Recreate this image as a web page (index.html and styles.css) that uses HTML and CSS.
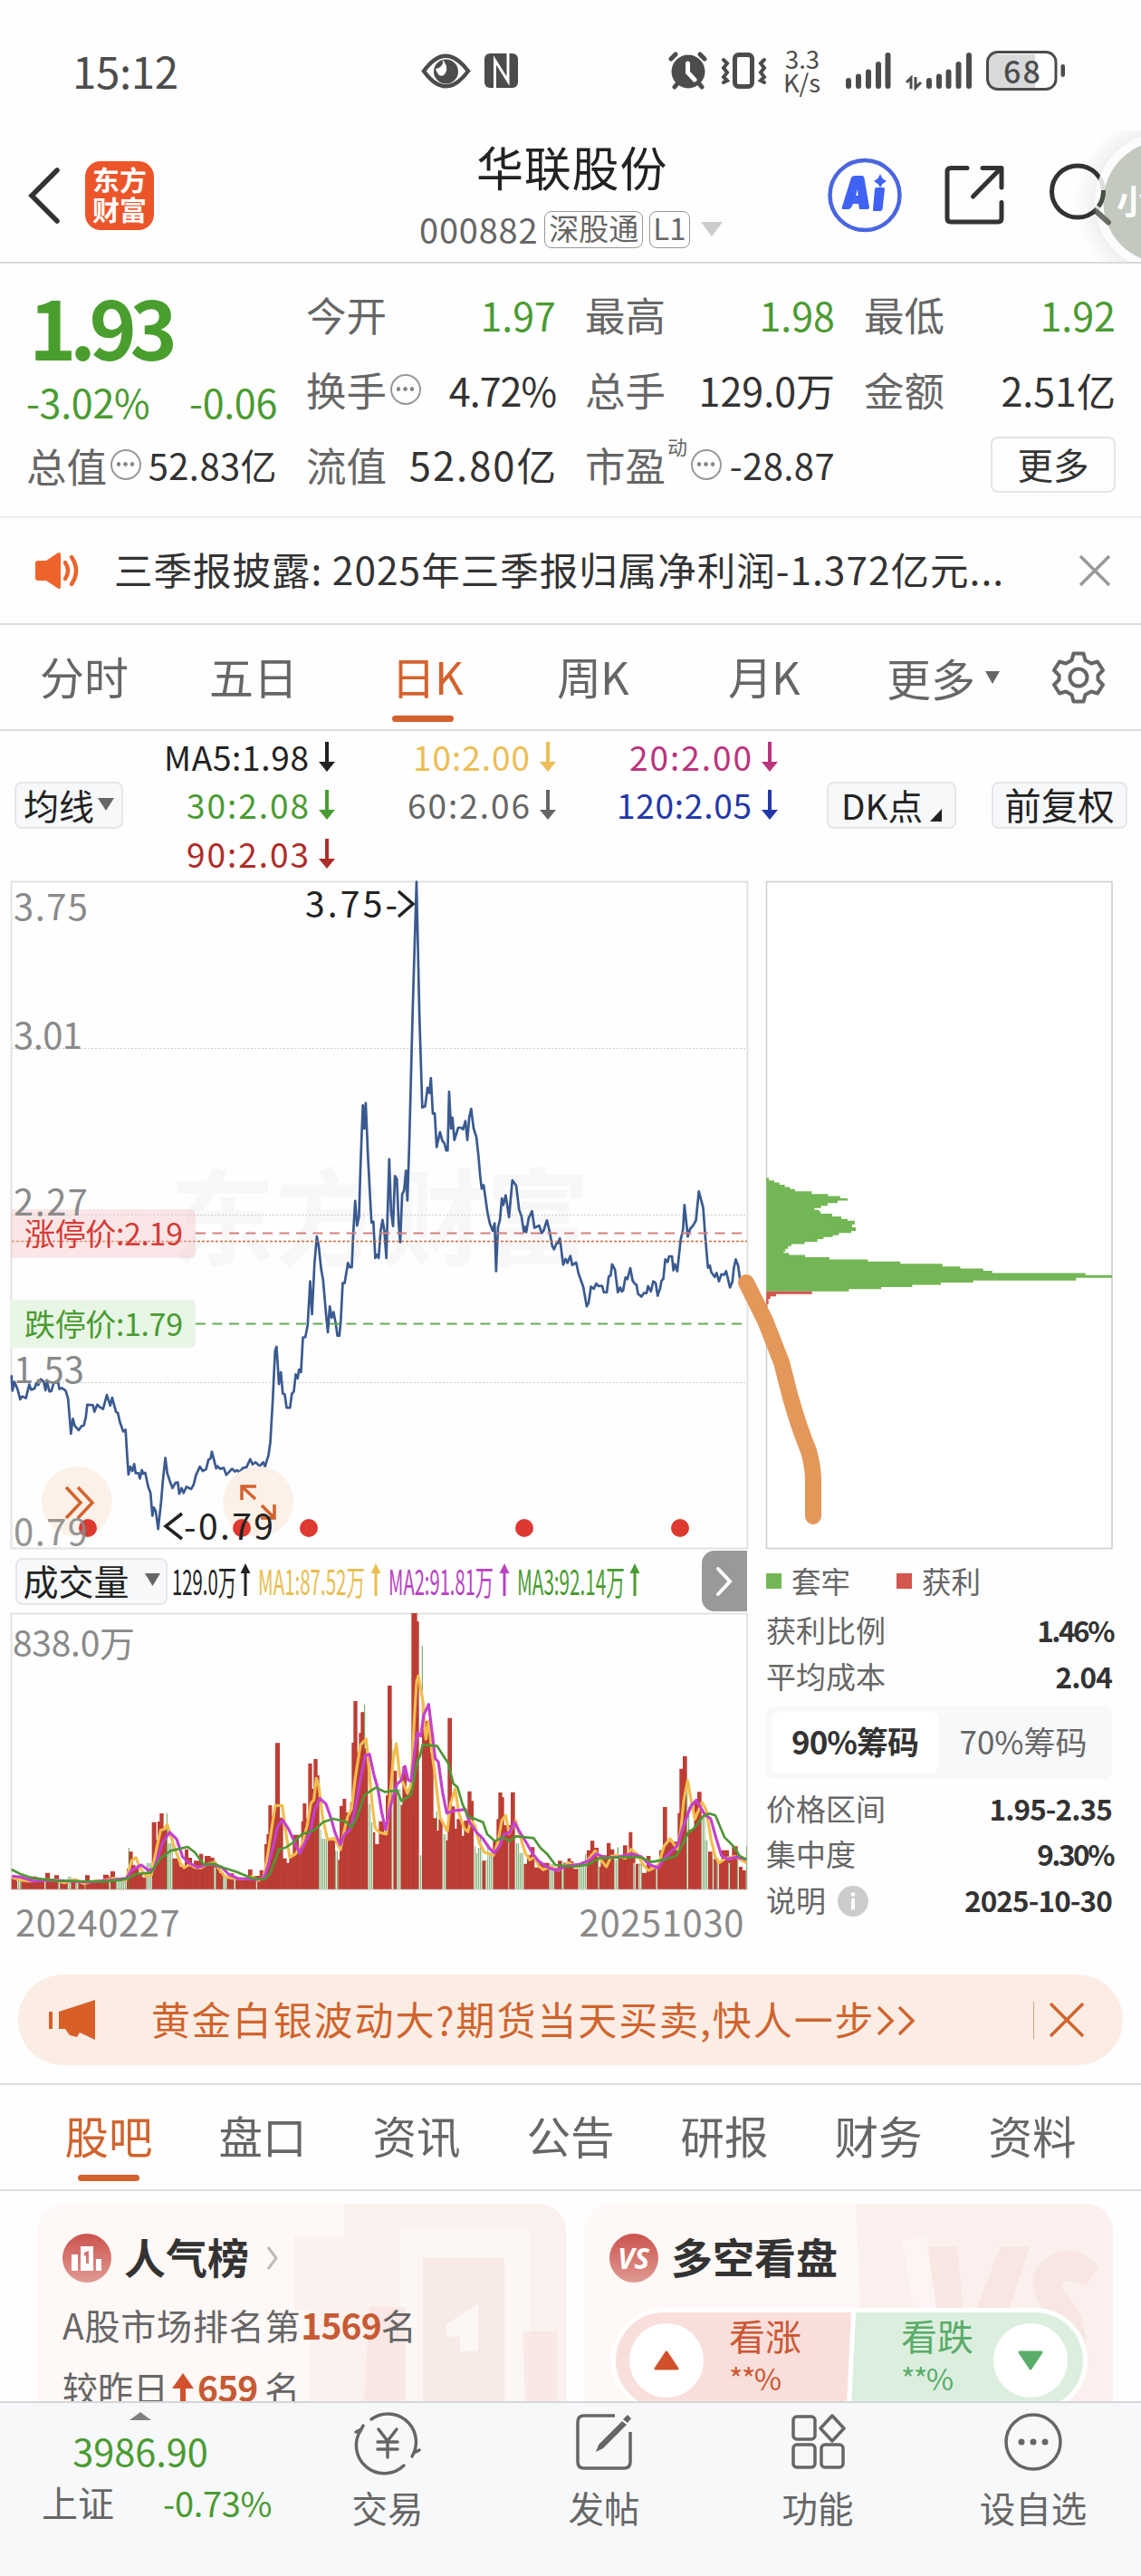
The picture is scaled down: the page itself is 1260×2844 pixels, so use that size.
FILE: index.html
```html
<!DOCTYPE html>
<html lang="zh-CN">
<head>
<meta charset="utf-8">
<title>华联股份 000882</title>
<link rel="stylesheet" href="styles.css">
</head>
<body>
<main class="app">

<div class="status">
  <span class="clock">15:12</span>
  <svg class="status-mid" width="110" height="44" viewBox="464 56 110 44">
    <path d="M468 78.500Q492 45 517 78.500Q492 112 468 78.500Z" fill="none" stroke="#4c4c4c" stroke-width="4.500"/>
    <circle cx="492.500" cy="79" r="13.500" fill="#4c4c4c"/><path d="M481 76Q490 74 489 66Q497 76 490 83Q484 86 481 76Z" fill="#fff"/>
    <rect x="535" y="59" width="37" height="38" rx="6" fill="#4c4c4c"/>
    <path d="M546.500 97V66.500L561 89.500V59" fill="none" stroke="#fff" stroke-width="3"/>
  </svg>
  <svg class="status-right" width="442" height="48" viewBox="736 54 442 48">
    <g stroke="#4c4c4c" stroke-width="5" stroke-linecap="round" fill="none">
      <path d="M741 65L746 60M778 65L773 60M745 96L750 90M775 96L770 90"/>
      <rect x="811.500" y="60.500" width="19" height="35" rx="4"/>
      <path d="M799 66L803 70L799 75L803 80L799 85L803 89L799 91M844 66L840 70L844 75L840 80L844 85L840 89L844 91" stroke-width="4"/>
    </g>
    <circle cx="760" cy="79" r="18.500" fill="#4c4c4c"/><path d="M759.500 70V80L767 88" stroke="#fff" stroke-width="5" fill="none" stroke-linecap="round"/>
    <g fill="#4c4c4c" class="txt" font-size="27.500"><text x="867" y="76" textLength="38">3.3</text><text x="865" y="101.500" textLength="41">K/s</text></g>
    <path stroke="#4c4c4c" stroke-width="6" stroke-linecap="round" d="M937 89V95M948 84.500V95M959 79.500V95M970 71V95M980.500 61V95M1026 89V95M1037 84.500V95M1047.500 79.500V95M1058.500 71V95M1070 61V95"/>
    <path stroke="#4c4c4c" stroke-width="3" fill="none" d="M1001 91L1006 86V98M1011 85V97L1017 91"/>
    <path d="M1092 60H1143V97H1092Z" fill="#d9d9d9"/>
    <rect x="1090.500" y="57.500" width="75.500" height="41" rx="11" fill="none" stroke="#4c4c4c" stroke-width="3"/>
    <rect x="1171.500" y="71" width="4.500" height="14" rx="2.200" fill="#4c4c4c"/>
    <text class="txt med" x="1108" y="91.500" font-size="34" textLength="41" fill="#4c4c4c">68</text>
  </svg>
</div>

<header class="header">
  <svg class="back" width="42" height="70" viewBox="0 0 42 70"><path d="M35 7L7 35L35 63" fill="none" stroke="#333" stroke-width="5.500" stroke-linecap="round"/></svg>
  <div class="logo"><span>东方</span><span>财富</span></div>
  <div class="title-box">
    <h1 class="title">华联股份</h1>
    <div class="code"><span class="code-num">000882</span><span class="badge wide">深股通</span><span class="badge">L1</span><svg width="26" height="18"><path d="M1 1H25L13 17Z" fill="#ccc"/></svg></div>
  </div>
  <svg class="header-icons" width="360" height="146" viewBox="900 144 360 146">
    <defs><radialGradient id="halo"><stop offset=".72" stop-color="#000" stop-opacity=".13"/><stop offset="1" stop-color="#000" stop-opacity="0"/></radialGradient></defs>
    <circle cx="955" cy="215.500" r="38.500" fill="none" stroke="#4a66e0" stroke-width="4.500"/>
    <path fill="#4062f4" fill-rule="evenodd" d="M940 196Q941 194 944 194H952Q954 194 954.500 197L960 229Q960 231 957 231H949L948 225H942L940 229Q939 231 937 231H931Q929 231 930 228ZM945 216H947.500L947 209ZM967 207H975Q977 207 977 209L974.500 231Q974 233 972 233H966Q963.500 233 964 231L966 209ZM972 192L974.500 197L979 200L974.500 203L972 207L969.500 203L965 200L969.500 197Z"/>
    <path fill="none" stroke="#333" stroke-width="5" stroke-linecap="round" stroke-linejoin="round" d="M1068 185.500H1050Q1046 185.500 1046 189.500V241Q1046 245 1050 245H1102Q1106 245 1106 241V223.500M1085 185.500H1106V207M1105 186L1074.500 217"/>
    <circle cx="1190" cy="211.500" r="28.500" fill="none" stroke="#333" stroke-width="5"/><path d="M1211 233L1224 245.500" stroke="#333" stroke-width="6" stroke-linecap="round"/>
    <circle cx="1286" cy="223" r="100" fill="url(#halo)" opacity=".5"/>
    <circle cx="1286" cy="223" r="77" fill="#fff" opacity=".45"/><circle cx="1286" cy="223" r="72" fill="none" stroke="#fff" stroke-width="9" opacity=".7"/>
    <circle cx="1286" cy="223" r="67.500" fill="#c4c9c0"/>
    <path d="M1210 233L1224 245.500" stroke="#454e43" stroke-width="6" stroke-linecap="round" opacity=".75"/><path d="M1218.500 210A28.500 28.500 0 0 1 1213 228" stroke="#454e43" fill="none" stroke-width="5"/>
    <text class="txt bold" x="1233" y="237" font-size="37" fill="#fff">小</text>
  </svg>
</header>

<section class="quote">
  <div class="price-col">
    <div class="price">1.93</div>
    <div class="change"><span>-3.02%</span><span>-0.06</span></div>
    <div class="pair small"><span class="lab">总值<i class="more-dot"></i></span><b class="tight">52.83亿</b></div>
  </div>
  <div class="qcol">
    <div class="pair"><span class="lab">今开</span><b class="down">1.97</b></div>
    <div class="pair"><span class="lab">换手<i class="more-dot"></i></span><b class="pct">4.72%</b></div>
    <div class="pair"><span class="lab">流值</span><b class="mid">52.80亿</b></div>
  </div>
  <div class="qcol">
    <div class="pair"><span class="lab">最高</span><b class="down">1.98</b></div>
    <div class="pair"><span class="lab">总手</span><b>129.0万</b></div>
    <div class="pair"><span class="lab">市盈<sup>动</sup><i class="more-dot"></i></span><b class="tight">-28.87</b></div>
  </div>
  <div class="qcol">
    <div class="pair"><span class="lab">最低</span><b class="down">1.92</b></div>
    <div class="pair"><span class="lab">金额</span><b>2.51亿</b></div>
    <div class="pair end"><span class="more-btn">更多</span></div>
  </div>
</section>

<section class="notice">
  <svg width="52" height="44" viewBox="0 0 52 44"><path d="M4 11H13L25 3Q29 0 29 5V39Q29 44 25 41L13 33H4Q1 33 1 30V14Q1 11 4 11Z" fill="#ee632c"/><path d="M34 13Q40 22 34 31M41 7Q51 22 41 37" stroke="#ee632c" stroke-width="4.500" fill="none" stroke-linecap="round"/></svg>
  <span class="notice-text">三季报披露: 2025年三季报归属净利润-1.372亿元...</span>
  <svg width="36" height="36" viewBox="0 0 36 36"><path d="M2 2L34 34M34 2L2 34" stroke="#999" stroke-width="3.500"/></svg>
</section>

<nav class="periods">
  <span class="p1">分时</span><span class="p2">五日</span><span class="p3 on">日K</span><span class="p4">周K</span><span class="p5">月K</span>
  <span class="p6">更多<svg width="18" height="14"><path d="M1 0H17L9 14Z" fill="#666"/></svg></span>
  <svg class="gear" width="60" height="60" viewBox="-30 -30 60 60"><path fill="none" stroke="#666" stroke-width="4" stroke-linejoin="round" d="M-5.500 -26.500H5.500L7.500 -19L14 -15.500L21 -17.500L27 -8L21.500 -2.500V2.500L27 8L21 17.500L14 15.500L7.500 19L5.500 26.500H-5.500L-7.500 19L-14 15.500L-21 17.500L-27 8L-21.500 2.500V-2.500L-27 -8L-21 -17.500L-14 -15.500L-7.500 -19Z"/><circle r="9.500" fill="none" stroke="#666" stroke-width="4"/></svg>
</nav>

<section class="averages">
  <span class="btn ma-btn">均线<svg width="18" height="14"><path d="M0 0H18L9 14Z" fill="#666"/></svg></span>
  <svg class="ma-values" width="760" height="164" viewBox="140 807 760 164">
    <g class="txt" font-size="37">
      <g fill="#222"><text x="181" y="851" textLength="160">MA5:1.98</text><path d="M359 819H363V841H370L361 852L352 841H359Z"/></g>
      <g fill="#ecbd55"><text x="456" y="851" textLength="129">10:2.00</text><path d="M603 819H607V841H614L605 852L596 841H603Z"/></g>
      <g fill="#bb347f"><text x="695" y="851" textLength="135">20:2.00</text><path d="M848 819H852V841H859L850 852L841 841H848Z"/></g>
      <g fill="#4a9b32"><text x="206" y="904" textLength="135">30:2.08</text><path d="M359 872H363V894H370L361 905L352 894H359Z"/></g>
      <g fill="#666"><text x="450" y="904" textLength="135">60:2.06</text><path d="M603 872H607V894H614L605 905L596 894H603Z"/></g>
      <g fill="#2338a8"><text x="681" y="904" textLength="149">120:2.05</text><path d="M848 872H852V894H859L850 905L841 894H848Z"/></g>
      <g fill="#ae2d29"><text x="206" y="958" textLength="135">90:2.03</text><path d="M359 926H363V948H370L361 959L352 948H359Z"/></g>
    </g>
  </svg>
  <span class="btn dk-btn">DK点<svg width="13" height="14"><path d="M13 0V14H0Z" fill="#222"/></svg></span>
  <span class="btn fq-btn">前复权</span>
</section>

<svg class="charts" width="1260" height="740" viewBox="0 971 1260 740">
  <text class="txt bold" x="188" y="1388" font-size="116" textLength="464" fill="#f7f7f8">东方财富</text>
  <rect x="12.500" y="973.500" width="813" height="736" fill="none" stroke="#e2e2e2" stroke-width="2"/>
  <path d="M13 1157.500H825M13 1341.500H825M13 1526.500H825" stroke="#ccc" stroke-width="1" stroke-dasharray="2 2"/>
  <g transform="translate(0 960) scale(.5293 .4847)">
    <path fill="none" stroke="#3a5a90" stroke-width="2.700" vector-effect="non-scaling-stroke" stroke-linejoin="round" d="M24 1152L26 1187L30 1167L37 1185L42 1207L46 1200L54 1204L61 1173L65 1185L72 1182L76 1170L80 1174L85 1161L91 1166L95 1186L98 1166L103 1189L107 1188L112 1170L121 1167L124 1183L129 1181L137 1187L142 1205L148 1285L152 1251L156 1267L164 1277L170 1268L175 1266L179 1248L182 1219L194 1220L197 1235L203 1219L208 1224L215 1229L223 1197L230 1221L234 1203L242 1235L246 1238L250 1258L257 1280L262 1276L265 1330L268 1378L272 1360L276 1370L280 1354L283 1375L289 1375L292 1387L296 1368L299 1376L303 1374L309 1405L314 1420L318 1472L321 1453L325 1462L330 1502L336 1442L340 1390L345 1340L349 1375L355 1395L360 1409L366 1397L371 1396L374 1422L379 1409L383 1420L389 1406L399 1411L404 1401L409 1379L417 1360L423 1370L430 1366L435 1344L439 1342L442 1326L451 1364L454 1359L459 1365L467 1363L472 1379L484 1365L490 1371L495 1368L499 1373L507 1363L514 1362L522 1343L527 1355L533 1350L542 1359L549 1350L553 1360L557 1345L560 1335L564 1305L569 1210L572 1140L574 1096L577 1087L582 1172L586 1145L590 1194L594 1195L598 1226H605L609 1194L613 1189L617 1150L621 1159L624 1139L628 1145L632 1066L637 1065L642 1037L647 938L651 1013L656 900L661 836L665 858L670 910L674 934L680 1010L684 1054L688 995L692 1021L696 1008L701 1038L704 1062H708L711 1028L715 942H719L726 896L730 906H734L737 830L741 755L745 811L749 790L752 680L757 537L760 590L763 532L768 660L775 804L779 802L783 885L787 877L790 885L794 825L798 798L802 823L806 885L809 770L812 660L816 780L820 812L824 698L828 705L832 810L835 849L839 740L843 731L847 686L850 754L854 620L861 320L869 28L875 330L881 542L887 539L892 497L896 509L899 475L903 556L907 555L911 632L918 598L923 618L927 623L931 640H934L937 506L941 590L944 565L948 616L956 588H962L966 592L971 573L975 616L979 565L983 545L988 589L994 610L998 650L1002 700L1005 727L1009 719L1017 781L1022 806L1028 823L1032 806L1035 915L1039 815L1043 798L1047 749L1050 764L1055 742L1062 792L1069 708L1077 720L1083 775L1088 790L1093 825L1096 814L1098 826L1103 794L1110 778L1115 816L1125 811L1130 828L1134 823L1141 799L1147 826L1152 857L1156 865L1161 852L1164 851L1168 840L1175 900L1180 887L1184 896L1190 880L1194 901L1202 895L1207 920L1217 951L1224 995L1228 987L1233 950L1239 955L1244 943L1249 949L1256 948L1260 963H1266L1270 927L1274 925L1277 899L1283 911L1289 963L1294 952L1297 961L1300 959L1305 929L1309 933L1315 908L1320 937L1325 944L1328 946L1331 966L1338 973L1344 964L1349 965L1352 949L1358 961L1363 938L1368 942L1372 971L1377 955L1380 937L1384 932L1388 888L1393 894L1396 881H1402L1405 913L1408 899L1413 915L1420 844L1425 820L1428 764L1435 836L1440 818L1446 811L1452 799L1458 733L1467 770L1471 830L1477 907L1481 902L1484 917L1491 928L1495 919L1500 938L1505 922L1511 923L1515 915L1523 952L1528 939L1531 908L1535 888L1540 902L1544 935"/>
  </g>
  <path d="M216 1361.500H825" stroke="#d4807e" stroke-width="2" stroke-dasharray="11 7.500"/><path d="M13 1370.500H825" stroke="#d0693b" stroke-width="1.500" stroke-dasharray="3 2"/><path d="M216 1461.500H825" stroke="#62ad52" stroke-width="2" stroke-dasharray="11 7.500"/>
  <path d="M12 1335H210Q216 1335 216 1341V1383Q216 1389 210 1389H12Z" fill="#f5c5c5" fill-opacity=".42"/>
  <path d="M12 1435H210Q216 1435 216 1441V1482Q216 1488 210 1488H12Z" fill="#e7f5e4" fill-opacity=".95"/>
  <g class="txt" font-size="40" fill="#8a8a8a"><text x="15" y="1015.500" textLength="82">3.75</text><text x="15" y="1158" textLength="76">3.01</text><text x="15" y="1342" textLength="82">2.27</text><text x="15" y="1527" textLength="78">1.53</text></g>
  <g class="txt" font-size="34"><text x="27" y="1375" textLength="175" fill="#d43c38">涨停价:2.19</text><text x="27" y="1475" textLength="175" fill="#4a9b32">跌停价:1.79</text></g>
  <circle cx="85" cy="1658" r="39" fill="#fbf1e8"/><circle cx="285" cy="1658" r="39" fill="#fbf1e8"/>
  <g fill="#de3931"><circle cx="97" cy="1687" r="10"/><circle cx="267" cy="1687" r="10"/><circle cx="341" cy="1687" r="10"/><circle cx="579" cy="1687" r="10"/><circle cx="751" cy="1687" r="10"/></g>
  <path d="M73 1642L89 1659L73 1676M86 1642L102 1659L86 1676M267 1656V1641H283M268 1642L282 1655M303 1661V1676H288M302 1675L289 1662" fill="none" stroke="#d4632d" stroke-width="3.500"/>
  <g class="txt" font-size="39" fill="#222"><text x="337" y="1013" textLength="102">3.75-</text><path d="M440 984L456 998L440 1012M201 1671L183 1685L201 1699" fill="none" stroke="#222" stroke-width="3.500"/><text x="203" y="1700" textLength="99">-0.79</text></g>
  <text class="txt" x="15" y="1706" font-size="40" textLength="82" fill="#8a8a8a" opacity=".9">0.79</text>
  <rect x="846.500" y="973.500" width="381.500" height="736" fill="#fff" stroke="#ccc" stroke-width="1.500"/>
  <g transform="translate(820 960) scale(.33333 .4847)">
    <path fill="#73b655" d="M79 702H87V708H105V713H122V718H140V723H157V728H174V733H229V739H283V744H323V749H348V754H315V760H282V766H260V771H238V775H253V779H259V784H297V790H327V796H348V800H372V808H363V815H375V823H360V828H319V833H299V837H268V842H248V848H206V853H162V858H151V864H142V870H136V873H154V878H207V883H288V888H415V893H523V898H662V904H721V909H797V914H827V919H1136V924H1224V930H1105V936H764V941H657V946H562V951H459V956H352V961H79Z"/>
    <path fill="#d2554e" d="M79 961H230V967H111V972H92V978H86V990H82V1000H79Z"/>
  </g>
  <path d="M824 1416L845 1458L863 1504L873 1543Q882 1575 893 1602Q898 1620 898 1634V1674" fill="none" stroke="#e39759" stroke-width="18" stroke-linecap="round" stroke-linejoin="round"/>
</svg>

<section class="lower">
  <div class="volume">
    <div class="volume-head">
      <span class="btn vol-btn">成交量<svg width="17" height="14"><path d="M0 0H17L8.500 14Z" fill="#666"/></svg></span>
      <svg width="590" height="70" viewBox="185 1711 590 70"><g class="txt" font-size="38">
        <g fill="#222"><text x="190" y="1760.500" textLength="71" lengthAdjust="spacingAndGlyphs">129.0万</text><path d="M269.500 1762V1737H265.500L271 1726L276.500 1737H272.500V1762Z"/></g>
        <g fill="#e7bd4f"><text x="285" y="1760.500" textLength="118" lengthAdjust="spacingAndGlyphs">MA1:87.52万</text><path d="M413.500 1762V1737H409.500L415 1726L420.500 1737H416.500V1762Z"/></g>
        <g fill="#b842c2"><text x="429" y="1760.500" textLength="116" lengthAdjust="spacingAndGlyphs">MA2:91.81万</text><path d="M555.500 1762V1737H551.500L557 1726L562.500 1737H558.500V1762Z"/></g>
        <g fill="#4a9b32"><text x="571" y="1760.500" textLength="119" lengthAdjust="spacingAndGlyphs">MA3:92.14万</text><path d="M699.500 1762V1737H695.500L701 1726L706.500 1737H702.500V1762Z"/></g>
      </g></svg>
      <span class="next"><svg width="20" height="34"><path d="M3 3L16 17L3 31" fill="none" stroke="#fff" stroke-width="4" stroke-linecap="round"/></svg></span>
    </div>
    <svg class="bars" width="826" height="308" viewBox="0 1780 826 308">
      <defs><pattern id="stripe" width="6" height="20" patternUnits="userSpaceOnUse"><rect width="6" height="20" fill="#fff"/><rect x="1" width="2.600" height="20" fill="#519142"/></pattern></defs>
      <rect x="12.500" y="1781.500" width="812.500" height="304.500" fill="none" stroke="#e2e2e2" stroke-width="2"/>
      <g transform="translate(0 1775) scale(.33333)">
        <path fill="#bd3d34" d="M38 932V893H55V905H70V898H95V890H122V897H150V878H165V900H180V886H195V902H228V905H282V886H297V905H342V884H360V890H366V873H381V898H420V865H426V808H440V852H448V860H460V880H472V893H485V932H503V710H518V770H522V708H529V681H542V735H553V932H570V830H595V857H612V800H624V828H636V850H642V838H660V815H673V855H678V822H698V828H710V855H726V878H740V895H762V880H775V900H822V867H836V888H860V869H872V890H876V783H883V750H889V654H901V690H912V448H927V695H938V830H950V845H958V820H970V752H990V790H998V708H1003V648H1015V700H1021V516H1034V600H1039V501H1052V555H1058V932H1086V770H1110V835H1125V656H1135V633H1147V678H1160V645H1165V447H1171V309H1184V480H1189V415H1195V346H1207V465H1219V932H1232V743H1243V783H1255V707H1273V745H1278V622H1284V258H1298V932H1303V540H1315V932H1327V653H1333V525H1347V600H1363V18H1382V45H1388V932H1398V375H1425V480H1436V697H1447V738H1453V700H1466V932H1476V770H1483V365H1497V658H1507V732H1513V700H1530V755H1537V705H1549V608H1562V640H1569V932H1597V838H1609V932H1633V770H1645V700H1651V612H1664V628H1670V720H1692V611H1706V932H1735V848H1746V820H1758V793H1771V860H1783V845H1820V932H1836V860H1848V838H1862V845H1880V830H1891V840H1900V865H1916V932H1944V803H1956V772H1969V795H1983V858H1990V820H2010V779H2023V800H2035V932H2048V830H2064V787H2078V820H2083V743H2095V820H2105V848H2126V878H2142V822H2155V860H2172V932H2177V850H2184V803H2196V660H2210V775H2245V680H2251V533H2262V492H2276V735H2300V640H2310V610H2324V932H2346V808H2360V832H2377V840H2390V803H2415V835H2425V790H2444V858H2460V870H2473V932Z"/>
        <path stroke="#8a3d2b" stroke-opacity=".55" stroke-width="1.300" d="M100 900V932M112 900V932M175 905V932M320 908V932M350 890V932M450 870V932M464 890V932M600 860V932M618 840V932M630 840V932M648 850V932M672 850V932M686 830V932M791 900V932M815 900V932M888 790V932M900 720V932M912 720V932M926 700V932M942 850V932M963 820V932M985 780V932M1008 720V932M1020 700V932M1034 600V932M1140 680V932M1160 690V932M1176 520V932M1189 480V932M1202 470V932M1342 620V932M1354 680V932M1372 400V932M1424 500V932M1436 700V932M1502 680V932M1525 740V932M1545 720V932M1658 740V932M1675 740V932M1760 850V932M1785 860V932M1960 820V932M2012 840V932M2070 830V932M2210 780V932M2232 790V932M2257 720V932M2300 700V932"/>
        <path fill="url(#stripe)" d="M57 932V903H70V932ZM147 932V905H152V932ZM192 932V905H199V932ZM224 932V890H236V932ZM250 932V900H260V932ZM281 932V908H284V932ZM360 932V900H366V932ZM384 932V902H420V932ZM485 932V845H503V932ZM553 932V780H572V932ZM708 932V860H716V932ZM738 932V890H752V932ZM774 932V900H780V932ZM848 932V900H852V932ZM1056 932V735H1064V765H1086V932ZM1110 932V805H1120V932ZM1219 932V650H1227V710H1236V932ZM1298 932V470H1303V932ZM1315 932V600H1327V932ZM1388 932V820H1398V932ZM1466 932V750H1478V932ZM1569 932V790H1576V812H1582V795H1590V750H1597V932ZM1609 932V835H1615V780H1621V810H1633V932ZM1684 932V770H1687V932ZM1706 932V780H1720V812H1735V932ZM1820 932V850H1836V932ZM1860 932V840H1868V932ZM1916 932V850H1925V840H1938V815H1944V932ZM1980 932V825H1985V932ZM2035 932V835H2045V795H2048V932ZM2098 932V845H2106V932ZM2115 932V850H2126V932ZM2172 932V850H2177V932ZM2274 932V600H2280V932ZM2324 932V690H2336V770H2346V932ZM2360 932V820H2365V932ZM2375 932V830H2382V932ZM2412 932V845H2418V932ZM2442 932V800H2448V932ZM2471 932V790H2475V932Z"/>
        <path stroke="#459133" stroke-width="2.500" d="M427 795V932M553 681V932M1208 321V470M1399 127V380M1447 675V735M1298 435V640M2282 660V735M2047 793V830"/>
        <g fill="none" stroke-width="9.500" stroke-linejoin="round">
          <path stroke="#f2bd4c" d="M40 893L70 903L100 906L150 901L190 902L212 911L248 900L277 914L310 905L345 903L375 896L418 902L428 865L436 838L450 827L461 855L475 879L485 889L502 884L512 830L532 737L546 733L554 717L562 745L580 800L597 845L610 861L628 850L645 860L665 862L690 848L712 842L725 865L745 890L770 896L810 898L835 890L857 903L875 890L888 810L898 745L912 655L935 655L945 730L960 827L980 815L990 795L1000 785L1018 720L1030 648L1040 635L1048 565L1056 590L1068 690L1085 768L1108 764L1128 801L1140 740L1152 692L1165 665L1176 570L1194 455L1213 435L1223 540L1233 650L1243 730L1258 745L1280 750L1290 650L1303 500L1313 450L1325 560L1340 590L1350 615L1362 585L1372 380L1380 245L1386 225L1394 270L1402 315L1407 400L1411 435L1420 375L1430 470L1442 560L1450 630L1458 695L1482 740L1492 650L1508 600L1520 680L1537 730L1550 742L1560 705L1573 720L1588 780L1605 810L1635 820L1650 775L1662 705L1675 688L1687 748L1708 705L1724 760L1740 812L1755 835L1772 825L1784 855L1800 868L1825 858L1850 870L1870 855L1885 845L1915 858L1940 845L1972 805L1990 835L2009 858L2025 823L2045 820L2072 830L2090 800L2110 815L2130 850L2148 870L2180 855L2200 790L2220 765L2244 800L2255 740L2265 640L2278 572L2290 640L2302 700L2326 645L2340 670L2356 770L2370 825L2382 845L2405 830L2435 824L2473 845"/>
          <path stroke="#c440cd" d="M40 889L70 892L110 906L160 902L245 906L295 909L380 901L420 896L435 870L468 852L492 870L510 866L525 820L540 775L562 744L585 766L605 825L625 845L655 860L690 850L710 851L735 860L760 885L790 897L850 900L875 894L890 850L905 790L920 725L936 702L956 733L973 770L993 813L1012 775L1028 745L1042 670L1060 632L1080 650L1096 695L1110 745L1127 785L1142 750L1160 735L1178 660L1194 570L1210 490L1224 485L1238 550L1252 600L1265 680L1278 735L1290 670L1315 585L1330 570L1342 525L1352 570L1362 575L1374 470L1382 415L1394 425L1404 355L1420 320L1430 400L1442 500L1452 510L1466 610L1480 680L1505 672L1542 668L1555 710L1580 745L1600 765L1620 795L1638 812L1655 790L1670 750L1688 745L1704 710L1720 740L1745 780L1765 815L1785 840L1815 860L1845 870L1875 855L1920 850L1955 835L1975 815L2005 828L2050 825L2095 815L2125 825L2150 850L2180 862L2200 830L2245 787L2265 720L2290 655L2307 637L2335 685L2355 700L2370 755L2390 820L2410 833L2440 826L2473 834"/>
          <path stroke="#4d9635" stroke-width="8" d="M38 867L70 883L105 895L190 904L270 906L340 907L400 902L425 896L450 882L500 877L532 830L565 805L622 792L645 810L675 850L710 848L740 861L785 875L835 896L875 900L895 880L925 800L945 795L968 780L1000 750L1040 738L1070 710L1103 699L1145 708L1165 728L1184 690L1208 620L1245 596L1275 610L1315 605L1330 640L1362 620L1382 510L1392 490L1400 454L1448 458L1485 515L1502 583L1516 595L1532 650L1550 690L1600 710L1614 750L1640 773L1665 760L1688 773L1710 757L1768 763L1790 795L1812 815L1840 852L1900 858L1950 850L1985 830L2090 825L2120 826L2160 842L2210 832L2240 822L2258 790L2280 745L2300 730L2330 690L2350 682L2370 688L2400 760L2430 790L2450 822L2473 834"/>
        </g>
      </g>
      <text class="txt" x="14" y="1828.500" font-size="39" textLength="135" fill="#8a8a8a">838.0万</text>
    </svg>
    <div class="dates"><span>20240227</span><span>20251030</span></div>
  </div>
  <div class="chips">
    <div class="legend"><i class="sq g"></i><span>套牢</span><i class="sq r"></i><span>获利</span></div>
    <div class="crow"><span>获利比例</span><b class="pct">1.46%</b></div>
    <div class="crow"><span>平均成本</span><b>2.04</b></div>
    <div class="seg"><span class="seg-on">90%筹码</span><span>70%筹码</span></div>
    <div class="crow"><span>价格区间</span><b>1.95-2.35</b></div>
    <div class="crow"><span>集中度</span><b class="pct">9.30%</b></div>
    <div class="crow"><span class="inf">说明<svg width="34" height="34"><circle cx="17" cy="17" r="17" fill="#ccc"/><circle cx="17" cy="9.500" r="2.300" fill="#fff"/><rect x="15" y="13.500" width="4" height="13" rx="1.500" fill="#fff"/></svg></span><b>2025-10-30</b></div>
  </div>
</section>

<section class="ad">
  <svg width="54" height="46" viewBox="0 0 54 46"><path d="M1 14H5V33H1ZM12 14L52 1V45L35 37L32 42L24 40L21 36L19 33H12Z" fill="#d95f29"/></svg>
  <span class="ad-text">黄金白银波动大?期货当天买卖,快人一步<svg width="48" height="40"><path d="M4 5L19 20L4 35M27 5L42 20L27 35" fill="none" stroke="#d0642e" stroke-width="3.500"/></svg></span>
  <i class="ad-line"></i>
  <svg width="40" height="38"><path d="M2 1L38 37M38 1L2 37" stroke="#d0642e" stroke-width="3.500"/></svg>
</section>

<nav class="tabs"><span class="on">股吧</span><span>盘口</span><span>资讯</span><span>公告</span><span>研报</span><span>财务</span><span>资料</span></nav>

<section class="cards">
  <article class="card">
    <svg class="card-art" width="300" height="220" viewBox="325 2432 300 220"><g fill="#f8e6e3" opacity=".38"><path d="M380 2432H625V2652H342V2550H325V2468H380Z"/></g><path d="M442 2460H585V2652H442Z" fill="#fff" opacity=".35"/><g fill="#f3dcd8" opacity=".45"><path fill-rule="evenodd" d="M467 2492H557V2652H467ZM493 2565L528 2542V2595H508V2577L493 2580ZM408 2546H448V2652H402ZM577 2573H615V2652H580Z"/></g></svg>
    <div class="card-head"><svg width="54" height="54" viewBox="0 0 54 54"><defs><linearGradient id="rg" x2="0" y2="1"><stop stop-color="#cc534d"/><stop offset="1" stop-color="#e09a93"/></linearGradient></defs><circle cx="27" cy="27" r="27" fill="url(#rg)"/><path fill="#fff" fill-rule="evenodd" d="M10 23H17V41H10ZM20 14H34V41H20ZM37 28H43V41H37ZM24 21L29 19V33H26V24L24 25Z"/></svg><h2>人气榜</h2><svg width="16" height="28"><path d="M3 2L12 14L3 26" stroke="#bbb" stroke-width="3" fill="none"/></svg></div>
    <p class="rank">A股市场排名第<b>1569</b>名</p>
    <p class="rank">较昨日<svg width="26" height="36"><path d="M13 3L25 20H16V36H10V20H1Z" fill="#d0512b"/></svg><b>659</b> 名</p>
  </article>
  <article class="card">
    <svg class="card-art" width="290" height="220" viewBox="939 2432 290 220"><path d="M945 2432H1229V2652H955Z" fill="#f6e3e0" opacity=".38"/><g fill="none" stroke="#fff" stroke-width="28" opacity=".35"><path d="M1010 2470L1040 2652"/></g><path d="M1024 2479H1057L1066 2580L1105 2479H1137L1085 2640H1048ZM1213 2502Q1190 2475 1162 2488Q1130 2506 1146 2540Q1165 2560 1172 2580Q1170 2600 1145 2595L1130 2625Q1180 2640 1197 2600Q1205 2560 1175 2530Q1165 2510 1200 2522Z" fill="#f3dcd8" opacity=".5"/></svg>
    <div class="card-head"><svg width="54" height="54" viewBox="0 0 54 54"><circle cx="27" cy="27" r="27" fill="url(#rg)"/><text class="vs" x="9" y="39" font-size="32" textLength="35" lengthAdjust="spacingAndGlyphs" fill="#fff">VS</text></svg><h2>多空看盘</h2></div>
    <div class="vote">
      <div class="half up"><i class="knob"><svg width="28" height="22"><path d="M14 2L26 20H2Z" fill="#d0512b" stroke="#d0512b" stroke-width="3" stroke-linejoin="round"/></svg></i><div><span>看涨</span><small>**%</small></div></div>
      <div class="half dn"><div><span>看跌</span><small>**%</small></div><i class="knob"><svg width="28" height="22"><path d="M14 20L26 2H2Z" fill="#5aac69" stroke="#5aac69" stroke-width="3" stroke-linejoin="round"/></svg></i></div>
    </div>
  </article>
</section>

<footer class="nav">
  <div class="index"><svg width="24" height="9"><path d="M12 0L24 9H0Z" fill="#808080"/></svg><strong>3986.90</strong><div><span>上证</span><em>-0.73%</em></div></div>
  <div class="item"><svg width="76" height="68" viewBox="-38 -34 76 68"><g fill="none" stroke="#666" stroke-width="3.500" stroke-linecap="round"><path d="M-18 -25A31 31 0 0 1 29 12L35 9M29 12L27 16M18 26A31 31 0 0 1 -29 -14L-35 -11M-29 -14L-27 -18"/><path d="M-10 -14L0 -1L10 -14M-11 0H11M-11 8H11M0 0V17"/></g></svg><span>交易</span></div>
  <div class="item"><svg width="76" height="68" viewBox="-38 -34 76 68"><path fill="none" stroke="#666" stroke-width="3.500" d="M12 -29H-22Q-29 -29 -29 -22V22Q-29 29 -22 29H22Q29 29 29 22V-11"/><path d="M26 -30L30 -26L26 -21L21 -25ZM20 -23L25 -19L-1 7L-9 11L-6 3Z" fill="#666"/></svg><span>发帖</span></div>
  <div class="item"><svg width="76" height="68" viewBox="-38 -34 76 68"><g fill="none" stroke="#666" stroke-width="3.500"><rect x="-27" y="-28" width="24" height="25" rx="4"/><rect x="-27" y="3" width="24" height="25" rx="4"/><rect x="4" y="3" width="24" height="25" rx="4"/><path d="M16 -29L29 -15L16 -1L3 -15Z" stroke-linejoin="round"/></g></svg><span>功能</span></div>
  <div class="item"><svg width="76" height="68" viewBox="-38 -34 76 68"><circle r="30" fill="none" stroke="#666" stroke-width="3.500"/><g fill="#666"><circle cx="-13" r="3.500"/><circle r="3.500"/><circle cx="13" r="3.500"/></g></svg><span>设自选</span></div>
</footer>
</main>
</body>
</html>
```
FILE: styles.css
```css
* { box-sizing: border-box; }
body { margin: 0; background: #fefefe; }
.app { width: 1260px; height: 2844px; overflow: hidden; font-family: "Noto Sans CJK SC", sans-serif; color: #333; display: flex; flex-direction: column; white-space: nowrap; }
.app > * { flex-shrink: 0; }
svg { display: block; overflow: visible; }
i, em { font-style: normal; }
h1, h2, p { margin: 0; font-weight: 400; }
.txt { font-family: "Noto Sans CJK SC", sans-serif; }
.vs { font-family: "Noto Sans", sans-serif; font-weight: 700; font-style: italic; }
.med { font-weight: 500; }
.bold { font-weight: 700; }

.status { height: 144px; padding: 12px 82px 0 80px; display: grid; grid-template-columns: 384px 272px 442px; align-items: center; }
.clock { font-size: 47.500px; line-height: 60px; letter-spacing: -.4px; color: #4c4c4c; }

.header { height: 147px; border-bottom: 2px solid #d9d9d9; display: grid; grid-template-columns: 28px 42px 24px 76px 250px 440px 40px 360px; overflow: hidden; }
.back { grid-column: 2; align-self: center; margin-bottom: 3px; }
.logo { grid-column: 4; align-self: center; height: 76px; margin-bottom: 3px; border-radius: 17px; background: #ec5529; color: #fff; font-weight: 700; font-size: 30px; line-height: 33px; text-align: center; padding-top: 3px; }
.logo span { display: block; }
.title-box { grid-column: 5 / 7; width: 560px; padding: 7px 0 0 293px; }
.title { font-size: 52px; line-height: 64px; height: 72px; padding-left: 63px; color: #222; letter-spacing: .8px; margin-top: 1px; }
.code { display: flex; align-items: center; gap: 7px; height: 58px; line-height: 40px; font-size: 38px; color: #666; }
.code-num { letter-spacing: .8px; }
.badge { border: 1.5px solid #999; border-radius: 8px; font-size: 33px; line-height: 35px; height: 41px; padding: 0 3px; }
.badge.wide { padding: 0 4px; }
.badge + svg { margin-left: 4px; }
.header-icons { grid-column: 8; }

.quote { height: 281px; border-bottom: 2px solid #eee; padding: 14px 0 0 29px; display: grid; grid-template-columns: 277px 276px 276px 278px; column-gap: 32px; }
.price-col { padding-top: 9px; }
.price { height: 96px; line-height: 92px; font-size: 89px; font-weight: 700; letter-spacing: -7.500px; color: #4a9e2e; padding-left: 3px; }
.change { height: 68px; line-height: 66px; font-size: 43px; color: #4a9b32; display: flex; justify-content: space-between; letter-spacing: -.3px; }
.pair { height: 83px; display: flex; justify-content: space-between; align-items: center; font-size: 44.500px; }
.pair.small { height: 70px; }
.pair.end { justify-content: flex-end; }
.pair b { font-weight: 400; font-size: 43px; color: #333; }
.pair b.pct { letter-spacing: -1px; }
.pair b.down { color: #4a9b32; }
.pair b.tight { font-size: 40px; letter-spacing: .4px; }
.pair b.mid { font-size: 43.500px; letter-spacing: 2px; margin-right: -2px; }
.lab { color: #666; display: flex; align-items: center; }
.lab sup { font-size: 22px; line-height: 24px; align-self: flex-start; margin-top: 0; margin-left: 2px; }
.more-dot { width: 34px; height: 34px; border: 2.5px solid #999; border-radius: 50%; margin-left: 4px; background: radial-gradient(circle at 7px 14.500px, #888 2px, transparent 2.600px), radial-gradient(circle at 14.500px 14.500px, #888 2px, transparent 2.600px), radial-gradient(circle at 22px 14.500px, #888 2px, transparent 2.600px); }
.more-btn { width: 138px; height: 62px; border: 2px solid #e4e4e4; border-radius: 8px; font-size: 39.500px; line-height: 55px; text-align: center; }

.notice { height: 118px; border-bottom: 2px solid #ddd; padding: 0 33px 0 38px; display: flex; align-items: center; }
.notice-text { margin-left: 36px; flex: 1; font-size: 42.500px; letter-spacing: 1px; padding-bottom: 5px; }

.periods { height: 117px; border-bottom: 2px solid #ddd; padding: 0 40px 0 44px; display: grid; grid-template-columns: 187px 201px 183px 189px 175px 182px 60px; align-items: center; font-size: 49px; color: #666; line-height: 117px; }
.periods span { height: 115px; line-height: 112px; }
.periods .p3, .periods .p4, .periods .p5 { letter-spacing: -1px; }
.periods .on { color: #d4622e; position: relative; }
.periods .on::after { content: ""; position: absolute; left: 1px; top: 100px; width: 68px; height: 7px; border-radius: 4px; background: #d4602b; }
.p6 { display: flex; align-items: center; gap: 10px; }

.averages { height: 164px; padding-left: 16px; display: flex; align-items: center; }
.btn { display: flex; align-items: center; justify-content: center; height: 52px; border: 2px solid #e5e6e9; border-radius: 8px; background: #f7f8fa; color: #222; font-size: 39px; line-height: 46px; padding-bottom: 3px; }
.ma-btn { width: 120px; gap: 4px; }
.ma-values { margin-left: 4px; margin-right: 13px; }
.dk-btn { width: 143px; gap: 8px; font-size: 38.500px; }
.dk-btn svg { margin-top: 24px; }
.fq-btn { width: 150px; margin-left: 39px; font-size: 40.500px; }

.lower { display: grid; grid-template-columns: 846px 382px; height: 444px; }
.volume-head { display: flex; height: 69px; width: 825px; padding-left: 17px; align-items: center; }
.vol-btn { width: 168px; gap: 17px; }
.next { width: 50px; height: 67px; border-radius: 14px 0 0 14px; background: #999; display: flex; align-items: center; justify-content: center; }
.dates { display: flex; justify-content: space-between; width: 822px; padding-left: 17px; font-size: 40px; line-height: 67px; color: #8a8a8a; letter-spacing: .6px; }
.chips { font-size: 33px; line-height: 50px; color: #666; padding-top: 8px; }
.legend { display: flex; height: 52px; align-items: center; font-size: 32.500px; }
.sq { width: 17px; height: 17px; }
.sq.g { background: #73b655; }
.sq.r { background: #d2554e; margin-left: 51px; }
.sq + span { margin-left: 11px; }
.crow { display: flex; justify-content: space-between; height: 50px; align-items: center; margin-top: .5px; }
.crow:nth-child(2) { margin-top: 3px; }
.crow b { color: #333; font-weight: 600; font-size: 31.500px; letter-spacing: -.9px; }
.crow b.pct { letter-spacing: -2.500px; margin-right: -1px; }
.inf { display: flex; align-items: center; gap: 13px; }
.inf svg { margin-top: 4px; }
.seg { height: 80px; margin: 9px 0 7px; border-radius: 8px; background: #f7f8fa; padding: 6px; display: grid; grid-template-columns: 184px 188px; text-align: center; line-height: 64px; font-size: 35px; }
.seg-on { background: #fff; border-radius: 8px; font-weight: 700; color: #333; letter-spacing: -1px; }

.ad { width: 1220px; height: 100px; margin: 25px 20px 20px; border-radius: 50px; background: #fbede4; display: flex; align-items: center; padding: 0 42px 0 33px; color: #d0642e; font-size: 43px; }
.ad-text { flex: 1; margin-left: 60px; letter-spacing: 1.900px; line-height: 60px; padding-bottom: 4px; display: flex; align-items: center; }
.ad-text svg { margin-top: 5px; }
.ad-line { width: 1.500px; height: 41px; background: #dba07f; margin-right: 16px; }

.tabs { height: 119px; border: solid #ddd; border-width: 2px 0; display: grid; grid-template-columns: repeat(7, 170px); padding-left: 35px; text-align: center; font-size: 48.500px; line-height: 111px; color: #666; }
.tabs .on { color: #d0642e; position: relative; }
.tabs .on::after { content: ""; position: absolute; left: 51px; top: 99px; width: 68px; height: 7px; border-radius: 4px; background: #d4602b; }

.cards { height: 232px; padding: 14px 31px 0 41px; display: grid; grid-template-columns: 584px 584px; column-gap: 20px; overflow: hidden; }
.card { position: relative; height: 240px; border-radius: 30px 30px 0 0; background: #fef8f6; padding: 29px 28px; overflow: hidden; }
.card-art { position: absolute; right: 0; top: 0; }
.card-head { position: relative; display: flex; align-items: center; height: 62px; }
.card-head h2 { font-size: 46px; line-height: 56px; font-weight: 700; margin: -6px 18px 0 14px; }
.rank { position: relative; display: flex; align-items: center; height: 69px; font-size: 39px; color: #666; padding-top: 5px; letter-spacing: .8px; }
.rank b { color: #c65a34; letter-spacing: -.9px; }
.card-head + .rank { margin-top: 5px; }
.rank:last-child { letter-spacing: 0; }
.rank:last-child svg { margin: 0 3px; }
.rank:last-child b { margin-right: 8px; }
.vote { position: absolute; left: 30px; top: 115px; width: 526px; height: 116px; border: 5px solid #fff; border-radius: 58px; overflow: hidden; display: grid; grid-template-columns: 257px 256px; column-gap: 3px; background: #fff; }
.half { display: flex; align-items: center; line-height: 48px; font-size: 40px; }
.half div { display: flex; flex-direction: column; height: 104px; }
.half small { font-size: 33px; line-height: 46px; letter-spacing: -1.500px; }
.up { background: #f9dfdb; color: #cc5734; padding-left: 15px; gap: 28px; clip-path: polygon(0 0, 100% 0, 98% 100%, 0 100%); margin-right: -3px; }
.dn { background: #dcefdf; color: #5aac69; padding-left: 55px; gap: 22px; clip-path: polygon(2% 0, 100% 0, 100% 100%, 0 100%); }
.knob { width: 82px; height: 82px; border-radius: 50%; background: #fff; display: flex; align-items: center; justify-content: center; flex-shrink: 0; }

.nav { height: 194px; background: #f7f8fa; border-top: 2px solid #d5d6d9; display: grid; grid-template-columns: 310px 236px 242px 230px 246px; color: #666; }
.index { display: grid; grid-template-rows: 20px 66px 56px; color: #666; font-size: 40px; }
.index > svg { justify-self: center; margin-top: 10px; }
.index strong { font-weight: 400; font-size: 41.500px; line-height: 64px; text-align: center; color: #4a9b32; }
.index div { display: flex; padding-left: 46px; gap: 54px; line-height: 47px; }
.index em { color: #4a9b32; font-size: 38px; letter-spacing: -.3px; }
.item { display: flex; flex-direction: column; align-items: center; padding-top: 9px; font-size: 39.500px; line-height: 56px; gap: 10px; }
```
